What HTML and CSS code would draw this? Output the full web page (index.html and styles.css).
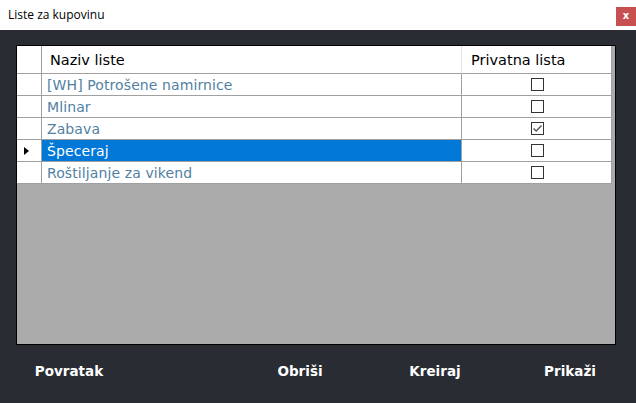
FILE: index.html
```html
<!DOCTYPE html>
<html>
<head>
<meta charset="utf-8">
<link rel="stylesheet" href="styles.css">
</head>
<body>
<div class="window">
  <div class="titlebar">
    <span class="title">Liste za kupovinu</span>
    <span class="close">x</span>
  </div>
  <div class="content">
    <div class="grid">
      <div class="cell rh head"></div>
      <div class="cell hname head">Naziv liste</div>
      <div class="cell hchk head">Privatna lista</div>

      <div class="cell rh"></div>
      <div class="cell name">[WH] Potrošene namirnice</div>
      <div class="cell chk"><span class="box"></span></div>

      <div class="cell rh"></div>
      <div class="cell name">Mlinar</div>
      <div class="cell chk"><span class="box"></span></div>

      <div class="cell rh"></div>
      <div class="cell name">Zabava</div>
      <div class="cell chk"><span class="box"><svg width="11" height="11" viewBox="0 0 11 11"><path d="M1.5 5.5 L4.2 8 L9.5 2.5" fill="none" stroke="#555" stroke-width="1.4"/></svg></span></div>

      <div class="cell rh"><span class="arrow"></span></div>
      <div class="cell name sel">Špeceraj</div>
      <div class="cell chk"><span class="box"></span></div>

      <div class="cell rh"></div>
      <div class="cell name">Roštiljanje za vikend</div>
      <div class="cell chk"><span class="box"></span></div>
    </div>
  </div>
  <div class="footer">
    <div class="btn first">Povratak</div>
    <div class="btn">Obriši</div>
    <div class="btn">Kreiraj</div>
    <div class="btn">Prikaži</div>
  </div>
</div>
</body>
</html>
```
FILE: styles.css
```css
html, body {
  margin: 0;
  padding: 0;
}
body {
  width: 636px;
  height: 403px;
  background: #292c33;
  overflow: hidden;
}
.window {
  display: flex;
  flex-direction: column;
  width: 636px;
  height: 403px;
}
.titlebar {
  height: 30px;
  background: #ffffff;
  display: flex;
  align-items: flex-start;
  justify-content: space-between;
  flex-shrink: 0;
}
.title {
  font-family: "Open Sans", "Liberation Sans", sans-serif;
  font-size: 12px;
  color: #000;
  margin-left: 8px;
  margin-top: 7px;
  line-height: 16px;
}
.close {
  width: 20px;
  height: 19px;
  margin-top: 7px;
  background: #c75050;
  color: #fff;
  font-family: "DejaVu Sans", sans-serif;
  font-weight: bold;
  font-size: 10px;
  line-height: 18px;
  text-align: center;
}
.content {
  padding: 15px 21px 0 16px;
}
.grid {
  width: 598px;
  height: 298px;
  border: 1px solid #000;
  background: #ababab;
  display: grid;
  grid-template-columns: 25px 420px 150px;
  grid-template-rows: 28px repeat(5, 22px);
  align-content: start;
  font-family: "DejaVu Sans", sans-serif;
  font-size: 14px;
}
.cell {
  box-sizing: border-box;
  background: #fff;
  border-right: 1px solid #a0a0a0;
  border-bottom: 1px solid #a0a0a0;
  display: flex;
  align-items: center;
  white-space: nowrap;
  overflow: hidden;
}
.head {
  color: #000;
  font-size: 14.5px;
}
.hname {
  padding-left: 8px;
  border-right-color: #e3e3e3;
}
.hchk {
  padding-left: 9px;
}
.name {
  padding-left: 5px;
  color: #5281a3;
  letter-spacing: 0.1px;
}
.name.sel {
  background: #0078d7;
  color: #fff;
}
.chk {
  justify-content: center;
}
.rh {
  justify-content: flex-start;
  padding-left: 7px;
}
.arrow {
  width: 0;
  height: 0;
  border-top: 4px solid transparent;
  border-bottom: 4px solid transparent;
  border-left: 5px solid #000;
}
.box {
  box-sizing: border-box;
  width: 13px;
  height: 13px;
  border: 1px solid #333;
  background: #fff;
  display: flex;
  align-items: center;
  justify-content: center;
  margin-left: 1px;
}
.footer {
  display: flex;
  align-items: center;
  height: 51px;
  padding-left: 19px;
}
.btn {
  width: 100px;
  text-align: center;
  color: #fff;
  font-family: "DejaVu Sans", sans-serif;
  font-weight: bold;
  font-size: 13.5px;
  margin-left: 35px;
}
.btn.first {
  margin-left: 0;
  margin-right: 96px;
}
```
